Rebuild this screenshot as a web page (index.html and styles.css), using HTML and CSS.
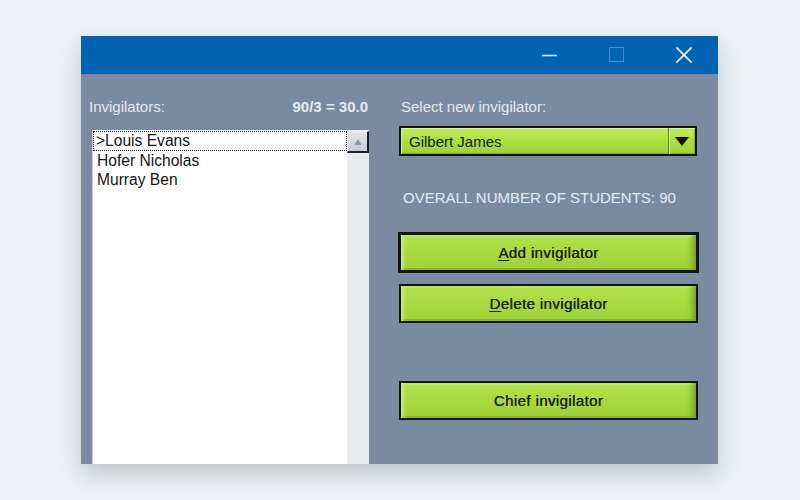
FILE: index.html
```html
<!DOCTYPE html>
<html>
<head>
<meta charset="utf-8">
<link rel="stylesheet" href="styles.css">
</head>
<body>
<div class="window">
  <div class="titlebar">
    <span class="tb-btn">
      <svg width="16" height="16" viewBox="0 0 16 16"><line x1="0" y1="8.5" x2="15" y2="8.5" stroke="#d8f0ff" stroke-width="1.6"/></svg>
    </span>
    <span class="tb-btn">
      <svg width="16" height="16" viewBox="0 0 16 16"><rect x="0.5" y="0.5" width="14" height="14" fill="none" stroke="#3f8fd0" stroke-width="1"/></svg>
    </span>
    <span class="tb-btn">
      <svg width="16" height="16" viewBox="0 0 16 16"><path d="M0.5 0.5 L15.5 15.5 M15.5 0.5 L0.5 15.5" stroke="#ffffff" stroke-width="1.6"/></svg>
    </span>
  </div>
  <div class="content">
    <div class="left">
      <div class="left-head">
        <span class="lbl">Invigilators:</span>
        <span class="lbl bold">90/3 = 30.0</span>
      </div>
      <div class="listbox">
        <ul class="items">
          <li class="item focus">&gt;Louis Evans</li>
          <li class="item">Hofer Nicholas</li>
          <li class="item">Murray Ben</li>
        </ul>
        <div class="scrollbar">
          <div class="sb-up">
            <svg width="10" height="8" viewBox="0 0 10 8"><path d="M5 1 L8.5 7 L1.5 7 Z" fill="#8a96a0"/></svg>
          </div>
        </div>
      </div>
    </div>
    <div class="right">
      <div class="lbl sel-lbl">Select new invigilator:</div>
      <div class="combo">
        <span class="combo-text">Gilbert James</span>
        <span class="combo-arrow">
          <svg width="14" height="9" viewBox="0 0 14 9"><path d="M0 0 L14 0 L7 9 Z" fill="#111"/></svg>
        </span>
      </div>
      <div class="lbl overall">OVERALL NUMBER OF STUDENTS: 90</div>
      <button class="gbtn default"><u>A</u>dd invigilator</button>
      <button class="gbtn delete"><u>D</u>elete invigilator</button>
      <button class="gbtn chief">Chief invigilator</button>
    </div>
  </div>
</div>
</body>
</html>
```
FILE: styles.css
```css
html, body {
  margin: 0;
  padding: 0;
  background: #eef2f7;
  font-family: "Liberation Sans", Arial, sans-serif;
}
body {
  padding: 36px 0 0 81px;
  height: 500px;
  box-sizing: border-box;
  overflow: hidden;
}
.window {
  width: 637px;
  height: 428px;
  background: #7a8ba1;
  display: flex;
  flex-direction: column;
  box-shadow: 0 10px 22px rgba(60, 80, 100, 0.28);
}
.titlebar {
  height: 38px;
  background: #0063b1;
  display: flex;
  justify-content: flex-end;
  align-items: center;
  padding-right: 26px;
  gap: 51px;
  flex-shrink: 0;
}
.tb-btn {
  width: 16px;
  height: 16px;
  display: flex;
}
.tb-btn svg { display: block; }
.content {
  flex: 1;
  display: flex;
  min-height: 0;
}
.left {
  width: 280px;
  padding-left: 8px;
  display: flex;
  flex-direction: column;
}
.lbl {
  color: #e4eaf1;
  font-size: 15px;
  line-height: 18px;
}
.bold { font-weight: bold; }
.left-head {
  display: flex;
  justify-content: space-between;
  padding: 24px 1px 0 0;
  height: 18px;
}
.listbox {
  margin: 14px 0 0 3px;
  flex: 1;
  background: #ffffff;
  border-left: 1px solid #c9d0d6;
  display: flex;
}
.items {
  list-style: none;
  margin: 0;
  padding: 1px 0 0 0;
  flex: 1;
}
.item {
  font-size: 15.6px;
  line-height: 19.5px;
  color: #141414;
  padding-left: 4px;
  height: 19.5px;
}
.focus {
  outline: 1px dotted #222;
  outline-offset: -1px;
  padding-left: 3px;
}
.scrollbar {
  width: 22px;
  background: #e9ecef;
  padding-top: 1px;
}
.sb-up {
  width: 22px;
  height: 22px;
  box-sizing: border-box;
  background: linear-gradient(#e2e6ea, #c6ccd2);
  border-top: 1px solid #f4f6f8;
  border-left: 1px solid #f4f6f8;
  border-right: 2px solid #1b1f24;
  border-bottom: 2px solid #1b1f24;
  display: flex;
  align-items: center;
  justify-content: center;
}
.right {
  width: 300px;
  margin-left: 29px;
  display: flex;
  flex-direction: column;
}
.sel-lbl {
  padding: 24px 0 0 3px;
}
.combo {
  margin: 10px 1px 0 1px;
  height: 30px;
  box-sizing: border-box;
  border: 2px solid #101410;
  background: linear-gradient(#c4ec62, #aee040 45%, #9fd236);
  box-shadow: inset 1px 1px 0 #d8f88a, inset -1px -1px 0 #7ea828;
  display: flex;
  align-items: center;
}
.combo-text {
  flex: 1;
  font-size: 15px;
  color: #142010;
  padding-left: 8px;
}
.combo-arrow {
  width: 26px;
  height: 100%;
  border-left: 1px solid #5d7e1c;
  box-shadow: inset 1px 0 0 #d0f47c;
  display: flex;
  align-items: center;
  justify-content: center;
}
.overall {
  padding: 33px 0 0 5px;
  font-size: 15px;
}
.gbtn {
  display: block;
  font-family: "Liberation Sans", Arial, sans-serif;
  font-size: 15px;
  color: #1a2412;
  background: linear-gradient(#b4e24c, #a8d93e 50%, #a0d036);
  box-shadow: inset 4px 0 5px -2px #cdf47e, inset -6px 0 6px -3px #6c9620, inset 0 2px 0 #c2ec60, inset 0 -2px 0 #86b02a;
  border: 2px solid #111611;
  padding: 0;
  cursor: default;
  letter-spacing: 0.4px;
  text-shadow: 0.3px 0 0 #1a2412;
}
.gbtn u { text-decoration-thickness: 1px; text-underline-offset: 2px; }
.default {
  margin-top: 25px;
  width: 301px;
  height: 41px;
  border-width: 3px;
  margin-left: 0;
}
.delete {
  margin-top: 11px;
  width: 299px;
  height: 39px;
  margin-left: 1px;
}
.chief {
  margin-top: 58px;
  width: 299px;
  height: 39px;
  margin-left: 1px;
}
```
